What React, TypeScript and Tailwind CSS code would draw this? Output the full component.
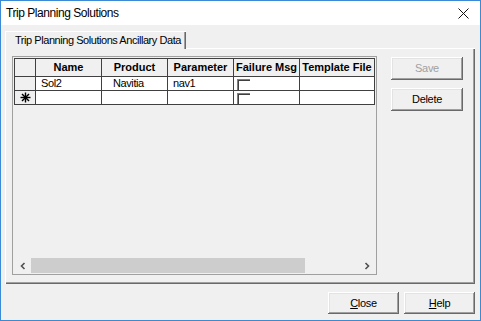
import React from "react"

const columns = [
    { key: 'name', label: 'Name', w: 'w-[66px]', pad: 'pl-[5px]' },
    { key: 'product', label: 'Product', w: 'w-[66px]', pad: 'pl-[11px]' },
    { key: 'parameter', label: 'Parameter', w: 'w-[66px]', pad: 'pl-[5px]' },
    { key: 'failure', label: 'Failure Msg', w: 'w-[66px]', pad: 'pl-[3px]' },
    { key: 'template', label: 'Template File', w: 'w-[75px]', pad: 'pl-[3px]' },
]

const rows = [
    { name: 'Sol2', product: 'Navitia', parameter: 'nav1', template: '' },
    { name: '', product: '', parameter: '', template: '', isNew: true },
]

const raised = "shadow-[inset_-1px_-1px_#696969,inset_1px_1px_#ffffff,inset_-2px_-2px_#a0a0a0,inset_2px_2px_#e3e3e3]"

function Asterisk() {
    return (
        <svg width="11" height="11" viewBox="0 0 11 11" stroke="#000" strokeWidth="1.4">
            <line x1="5.5" y1="0.5" x2="5.5" y2="10.5" />
            <line x1="0.5" y1="5.5" x2="10.5" y2="5.5" />
            <line x1="2" y1="2" x2="9" y2="9" />
            <line x1="9" y1="2" x2="2" y2="9" />
        </svg>
    )
}

function CheckBox() {
    return (
        <div className="mt-[2px] ml-[3px] w-[13px] h-[13px] border-l border-t border-[#808080] bg-white">
            <div className="w-full h-full border-l border-t border-[#404040]" />
        </div>
    )
}

function Button({ children, disabled }: { children: React.ReactNode; disabled?: boolean }) {
    return (
        <button
            type="button"
            className={`w-[72px] h-[23px] bg-[#f0f0f0] text-[11px] tracking-[-0.3px] ${raised} ${disabled ? 'text-[#a0a0a0]' : 'text-black'}`}
        >
            {children}
        </button>
    )
}

export default function App() {
    return (
        <div className="w-[481px] h-[321px] border border-[#3a8ad6] bg-[#f0f0f0] flex flex-col font-['Liberation_Sans',Arial,sans-serif] text-black overflow-hidden">

            {/* Title bar */}
            <div className="h-[24px] bg-white flex items-center justify-between pl-[5px] pr-[11px]">
                <span className="text-[12px] tracking-[-0.45px] -mt-[1px]">Trip Planning Solutions</span>
                <svg width="11" height="11" viewBox="0 0 11 11" stroke="#111" strokeWidth="1">
                    <line x1="0.5" y1="0.5" x2="10.5" y2="10.5" />
                    <line x1="10.5" y1="0.5" x2="0.5" y2="10.5" />
                </svg>
            </div>

            {/* Body */}
            <div className="flex-1 flex flex-col px-[4px] pt-[6px]">

                {/* Tab strip */}
                <div className="flex h-[17px] relative z-10">
                    <div className="w-[181px] h-[18px] bg-[#f0f0f0] border-l border-t border-white shadow-[inset_-1px_0_#696969,inset_-2px_0_#a0a0a0] flex items-center pl-[9px] text-[11px] tracking-[-0.45px]">
                        Trip Planning Solutions Ancillary Data
                    </div>
                </div>

                {/* Tab panel */}
                <div className="h-[236px] w-[470px] flex gap-[14px] pl-[6px] pt-[7px] border-l border-t border-white shadow-[inset_-1px_-1px_#696969,inset_-2px_-2px_#a0a0a0]">

                    {/* Grid */}
                    <div className="w-[365px] h-[219px] border border-[#a0a0a0] bg-[#f0f0f0] flex flex-col">
                        <div className="flex-1 flex flex-col pl-[1px] pt-[1px]">
                            {/* Header */}
                            <div className="flex h-[19px] border-t border-l border-[#404040] w-fit">
                                <div className="w-[21px] border-r border-b border-[#404040] bg-[#f0f0f0]" />
                                {columns.map((c) => (
                                    <div key={c.key} className={`${c.w} border-r border-b border-[#404040] bg-[#f0f0f0] flex items-center justify-center text-[11px] font-bold whitespace-nowrap overflow-hidden`}>
                                        {c.label}
                                    </div>
                                ))}
                            </div>
                            {/* Rows */}
                            {rows.map((r, i) => (
                                <div key={i} className="flex h-[14px] border-l border-[#404040] w-fit">
                                    <div className="w-[21px] border-r border-b border-[#404040] bg-[#f0f0f0] flex items-center justify-center">
                                        {r.isNew && <Asterisk />}
                                    </div>
                                    <div className={`w-[66px] border-r border-b border-[#404040] bg-white text-[11px] tracking-[-0.4px] leading-[13px] ${columns[0].pad}`}>{r.name}</div>
                                    <div className={`w-[66px] border-r border-b border-[#404040] bg-white text-[11px] tracking-[-0.4px] leading-[13px] ${columns[1].pad}`}>{r.product}</div>
                                    <div className={`w-[66px] border-r border-b border-[#404040] bg-white text-[11px] tracking-[-0.4px] leading-[13px] ${columns[2].pad}`}>{r.parameter}</div>
                                    <div className="w-[66px] border-r border-b border-[#404040] bg-white overflow-hidden">
                                        <CheckBox />
                                    </div>
                                    <div className="w-[75px] border-r border-b border-[#404040] bg-white text-[11px]">{r.template}</div>
                                </div>
                            ))}
                        </div>

                        {/* Horizontal scrollbar */}
                        <div className="h-[15px] mx-[1px] mb-[1px] flex items-center bg-[#f0f0f0]">
                            <div className="w-[17px] h-full flex items-center justify-center">
                                <svg width="6" height="8" viewBox="0 0 6 8" fill="none" stroke="#505050" strokeWidth="1.6">
                                    <polyline points="4.5,1 1.5,4 4.5,7" />
                                </svg>
                            </div>
                            <div className="w-[274px] h-[15px] bg-[#cdcdcd]" />
                            <div className="flex-1" />
                            <div className="w-[17px] h-full flex items-center justify-center">
                                <svg width="6" height="8" viewBox="0 0 6 8" fill="none" stroke="#505050" strokeWidth="1.6">
                                    <polyline points="1.5,1 4.5,4 1.5,7" />
                                </svg>
                            </div>
                        </div>
                    </div>

                    {/* Side buttons */}
                    <div className="flex flex-col gap-[8px] pt-[1px]">
                        <Button disabled>Save</Button>
                        <Button>Delete</Button>
                    </div>
                </div>

                {/* Footer buttons */}
                <div className="flex justify-end gap-[5px] pt-[8px] pr-[1px]">
                    <button type="button" className={`w-[71px] h-[22px] bg-[#f0f0f0] text-[11px] tracking-[-0.3px] ${raised}`}>
                        <span className="underline">C</span>lose
                    </button>
                    <button type="button" className={`w-[71px] h-[22px] bg-[#f0f0f0] text-[11px] tracking-[-0.3px] ${raised}`}>
                        <span className="underline">H</span>elp
                    </button>
                </div>
            </div>
        </div>
    )
}
